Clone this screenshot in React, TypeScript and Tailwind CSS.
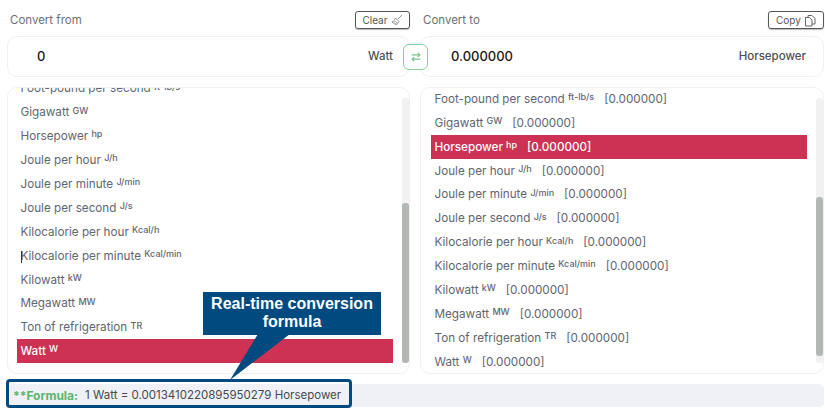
import React from "react";

const units: [string, string][] = [
  ["Foot-pound per second", "ft-lb/s"],
  ["Gigawatt", "GW"],
  ["Horsepower", "hp"],
  ["Joule per hour", "J/h"],
  ["Joule per minute", "J/min"],
  ["Joule per second", "J/s"],
  ["Kilocalorie per hour", "Kcal/h"],
  ["Kilocalorie per minute", "Kcal/min"],
  ["Kilowatt", "kW"],
  ["Megawatt", "MW"],
  ["Ton of refrigeration", "TR"],
  ["Watt", "W"],
];

function Row({ name, sym, active, value }: { name: string; sym: string; active: boolean; value?: boolean }) {
  return (
    <div className={`h-[23.9px] flex items-center pl-[3.5px] pt-[1.5px] whitespace-pre text-[11.7px] ${active ? "bg-[#cd3255] text-white font-medium" : "text-[#5f6670]"}`}>
      <span>{name} </span>
      <sup className="text-[9px] relative top-[-3px] leading-none font-medium">{sym}</sup>
      {value && <span className="ml-[10px]">[0.000000]</span>}
    </div>
  );
}

function Scrollbar({ top, height }: { top: number; height: number }) {
  return (
    <div className="absolute right-[0px] top-[10px] bottom-[10px] w-[7px] bg-[#f1f1f1] rounded-[3px]">
      <div className="absolute left-0 right-0 bg-[#b4b8b4] rounded-[3px]" style={{ top, height }} />
    </div>
  );
}

function Broom() {
  return (
    <svg width="12" height="12" viewBox="0 0 12 12" fill="none" stroke="#777" strokeWidth="0.8">
      <path d="M7 5 11 1M4.5 4 8 7.5 6 10.5C4.5 10.5 2.5 9.5 1 8 2.5 8 3.5 6 4.5 4Z" />
      <path d="M3 8.5 4.5 7M5 9.5 6 8" />
    </svg>
  );
}

function CopyIcon() {
  return (
    <svg width="12" height="13" viewBox="0 0 12 13" fill="none" stroke="#666" strokeWidth="1">
      <path d="M4 3V1.5H8L11 4.5V10H8" />
      <path d="M1.5 3.5H5.5L8 6V12H1.5Z" />
    </svg>
  );
}

function Swap() {
  return (
    <svg width="12" height="12" viewBox="0 0 14 14" fill="none" stroke="#7cc48f" strokeWidth="1.4" strokeLinecap="round" strokeLinejoin="round">
      <path d="M2.5 4.5H11.5M9.5 2.5 11.5 4.5 9.5 6.5" />
      <path d="M11.5 9.5H2.5M4.5 7.5 2.5 9.5 4.5 11.5" />
    </svg>
  );
}

export default function App() {
  return (
    <div className="relative w-[825px] h-[412px] bg-white overflow-hidden font-['Inter','Noto_Sans',sans-serif]">
      <div className="grid grid-cols-[403px_404px] gap-x-[10px] pl-[7px]">
        <div className="flex flex-col">
          <div className="h-[36px] flex items-center justify-between pl-[3px] pt-[4px]">
            <span className="mt-[2px] text-[11.5px] text-[#6b7078]">Convert from</span>
            <button className="h-[18px] w-[55px] border border-[#555] rounded-[3px] flex items-center justify-center gap-[3px] text-[10px] text-[#555] shadow-[0_1px_1px_#bbb]">
              Clear <Broom />
            </button>
          </div>
          <div className="h-[41px] border border-[#eef0f2] rounded-[10px] flex items-center justify-between pl-[29px] pr-[16px]">
            <span className="text-[13px] font-medium text-[#1a1a1a]">0</span>
            <span className="text-[11.5px] font-medium text-[#4b5058]">Watt</span>
          </div>
          <div className="relative mt-[10px] h-[287px] border border-[#eef0f2] rounded-[10px] overflow-hidden">
            <div className="relative mt-[-11.5px] ml-[9px] mr-[16px]">
              {units.map(([n, s]) => (
                <Row key={n} name={n} sym={s} active={n === "Watt"} />
              ))}
              <div className="absolute left-[4px] top-[174px] w-px h-[12px] bg-[#333]" />
            </div>
            <Scrollbar top={105} height={160} />
          </div>
        </div>
        <div className="flex flex-col">
          <div className="h-[36px] flex items-center justify-between pl-[3px] pt-[4px]">
            <span className="mt-[2px] text-[11.5px] text-[#6b7078]">Convert to</span>
            <button className="h-[18px] w-[56px] border border-[#555] rounded-[3px] flex items-center justify-center gap-[3px] text-[10px] text-[#555] shadow-[0_1px_1px_#bbb]">
              Copy <CopyIcon />
            </button>
          </div>
          <div className="h-[41px] border border-[#eef0f2] rounded-[10px] flex items-center justify-between pl-[30px] pr-[17px]">
            <span className="text-[13px] font-medium text-[#1a1a1a]">0.000000</span>
            <span className="text-[11.5px] font-medium text-[#4b5058]">Horsepower</span>
          </div>
          <div className="relative mt-[10px] h-[287px] border border-[#eef0f2] rounded-[10px] overflow-hidden">
            <div className="mt-[-1px] ml-[10px] mr-[16px]">
              {units.map(([n, s]) => (
                <Row key={n} name={n} sym={s} active={n === "Horsepower"} value />
              ))}
            </div>
            <Scrollbar top={99} height={159} />
          </div>
        </div>
      </div>
      <div className="mt-[10px] ml-[7px] mr-[1px] h-[23px] rounded-[5px] bg-[#f0f1f6] flex items-center pl-[6px] text-[11.5px] text-[#444a52] whitespace-pre">
        <span className="text-[12px] font-bold text-[#5cb46f]">**Formula:</span>
        <span className="ml-[7px]">1 Watt = 0.0013410220895950279 Horsepower</span>
      </div>

      {/* swap button, over the gap between the two cards */}
      <div className="absolute left-[403px] top-[44px] w-[25px] h-[26px] bg-white border border-[#8fcb9f] rounded-[6px] flex items-center justify-center">
        <Swap />
      </div>

      {/* annotation callout */}
      <div className="absolute left-[203px] top-[292px] w-[178px] h-[43px] bg-[#004a7f] text-white text-[16px] leading-[18px] font-bold text-center pt-[3px] font-['Liberation_Sans',sans-serif]">
        Real-time conversion<br />formula
      </div>
      <svg className="absolute left-[225px] top-[334px]" width="70" height="48" viewBox="0 0 70 48">
        <path d="M33 0 L5 46 L65 0 Z" fill="#004a7f" />
      </svg>
      <div className="absolute left-[6px] top-[379px] w-[346px] h-[29px] border-[3px] border-[#004a7f] rounded-[4px]" />
    </div>
  );
}
